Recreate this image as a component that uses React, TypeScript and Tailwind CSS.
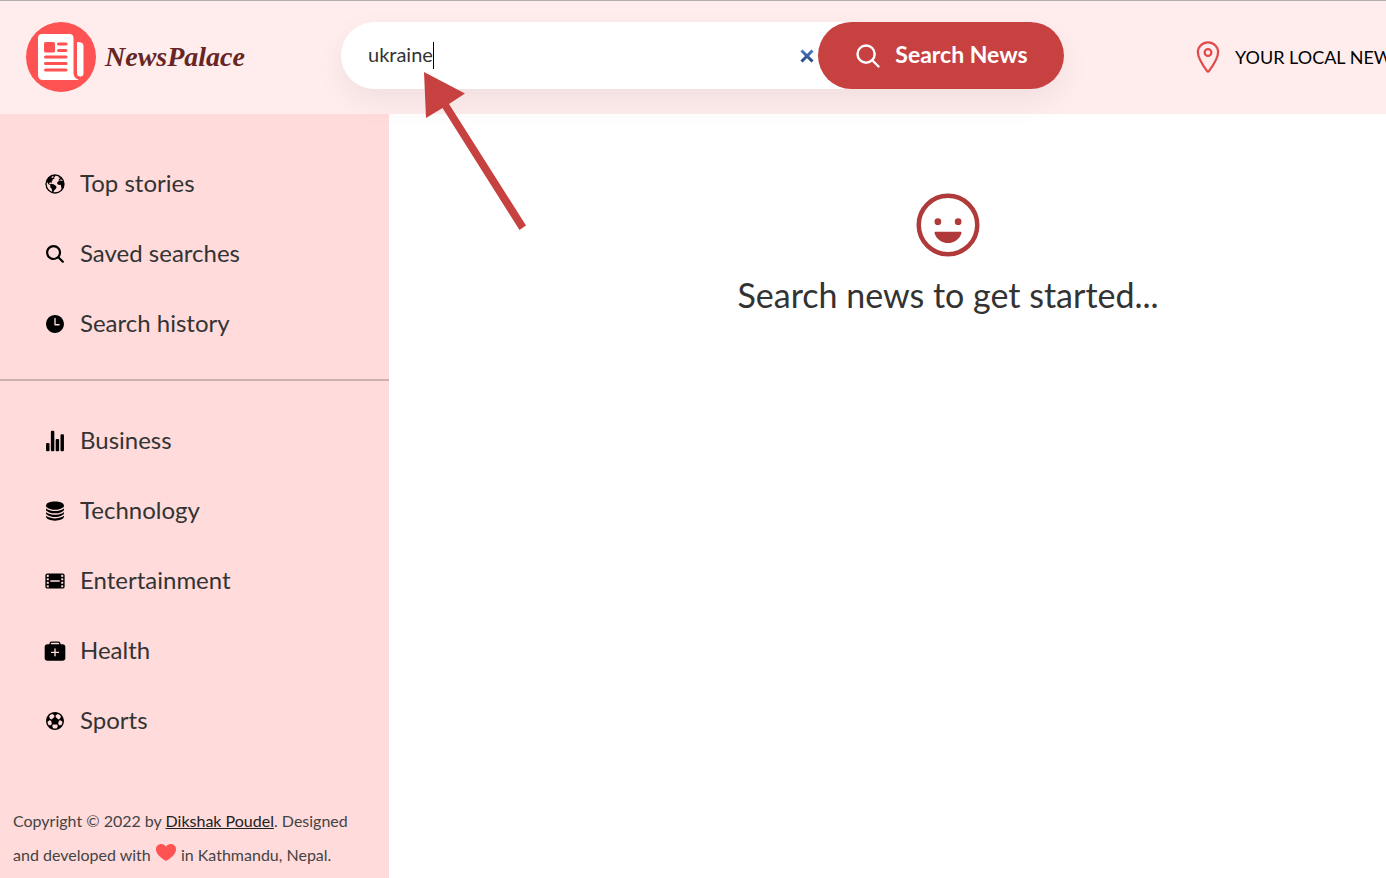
import { useState } from "react";
import type { ReactNode } from "react";
import type { IconType } from "react-icons";
import {
  IoEarth,
  IoFilm,
  IoFootball,
  IoHappyOutline,
  IoLocationOutline,
  IoMedkit,
  IoSearch,
  IoSearchOutline,
  IoServer,
  IoStatsChart,
  IoTime,
} from "react-icons/io5";

type NavItem = { label: string; icon: IconType };

const primary: NavItem[] = [
  { label: "Top stories", icon: IoEarth },
  { label: "Saved searches", icon: IoSearch },
  { label: "Search history", icon: IoTime },
];

const categories: NavItem[] = [
  { label: "Business", icon: IoStatsChart },
  { label: "Technology", icon: IoServer },
  { label: "Entertainment", icon: IoFilm },
  { label: "Health", icon: IoMedkit },
  { label: "Sports", icon: IoFootball },
];

function NavList({ items }: { items: NavItem[] }): ReactNode {
  return (
    <ul className="flex flex-col gap-[30px] pl-11">
      {items.map(({ label, icon: Icon }) => (
        <li key={label}>
          <a href="#" className="flex h-10 items-center gap-[14px] text-[24px] text-[#333]">
            <Icon className="size-[22px] text-black" aria-hidden="true" />
            <span className="pb-[3px]">{label}</span>
          </a>
        </li>
      ))}
    </ul>
  );
}

function Logo() {
  return (
    <a href="#" className="flex shrink-0 items-center gap-[9px]">
      <svg viewBox="0 0 70 70" className="size-[70px]" aria-hidden="true">
        <circle cx="35" cy="35" r="35" fill="#ff5252" />
        <path
          d="M16 12H43.500Q47.500 12 47.500 16V51Q47.500 56 53 58H17Q12 58 12 53V16Q12 12 16 12Z"
          fill="#fff"
        />
        <path d="M51 20H53Q57.500 20.500 57.500 24V51Q57.500 54.500 54.300 54.500Q51 54.500 51 51Z" fill="#fff" />
        <rect x="18" y="20" width="11" height="10.500" rx="1.500" fill="#ff5252" />
        <path
          d="M32.500 22H40M32.500 28.500H40M19.500 35H40M19.500 41.500H40M19.500 48H40"
          stroke="#ff5252"
          strokeWidth="3"
          strokeLinecap="round"
        />
      </svg>
      <span className="font-['Liberation_Serif',serif] text-[28px] leading-8 font-bold text-[#672626] italic">
        NewsPalace
      </span>
    </a>
  );
}

function SearchBar() {
  const [query, setQuery] = useState("ukraine");
  return (
    <form
      onSubmit={(e) => e.preventDefault()}
      className="flex h-[67px] w-[723px] shrink-0 rounded-full bg-white shadow-[0_12px_32px_rgba(0,0,0,0.06)]"
    >
      <div className="flex flex-1 items-center pr-1 pl-[27px]">
        <input
          type="text"
          aria-label="Search query"
          value={query}
          onChange={(e) => setQuery(e.target.value)}
          className="[field-sizing:content] bg-transparent pb-1 text-[20px] text-[#333] outline-none"
        />
        <span className="h-[27px] w-px bg-black" />
        <button
          type="button"
          aria-label="Clear"
          onClick={() => setQuery("")}
          className="ml-auto"
        >
          <svg viewBox="0 0 14 14" className="size-[14px]" aria-hidden="true">
            <defs>
              <linearGradient id="clear" x1="0" y1="0" x2="0" y2="14" gradientUnits="userSpaceOnUse">
                <stop offset="0" stopColor="#4a80cc" />
                <stop offset="1" stopColor="#24407c" />
              </linearGradient>
            </defs>
            <path d="M1.500 1.500L12.500 12.500M12.500 1.500L1.500 12.500" stroke="url(#clear)" strokeWidth="3" />
          </svg>
        </button>
      </div>
      <button
        type="submit"
        className="flex w-[246px] items-center justify-center gap-[13px] rounded-full bg-[#c74141] text-[23px] font-bold text-white"
      >
        <IoSearchOutline className="size-7 [&_path]:stroke-[44px]" aria-hidden="true" />
        <span className="pb-[3px]">Search News</span>
      </button>
    </form>
  );
}

function Heart() {
  return (
    <svg viewBox="0 0 20 17" className="mx-px inline h-[17px] w-5 align-baseline" role="img" aria-label="love">
      <path
        d="M10 17C6 14.500 0 10.500 0 5.200C0 2.200 2.300 0 5.200 0C7.300 0 9 1 10 2.800C11 1 12.700 0 14.800 0C17.700 0 20 2.200 20 5.200C20 10.500 14 14.500 10 17Z"
        fill="#ff5252"
      />
    </svg>
  );
}

function Arrow() {
  return (
    <svg
      viewBox="0 0 102 158"
      className="pointer-events-none absolute top-[72px] left-[424px] z-20 h-[158px] w-[102px]"
      aria-hidden="true"
    >
      <path d="M0 0L41 21.500L25 32L102 153.500L95.500 158L18.500 36L2 46Z" fill="#c74141" />
    </svg>
  );
}

export default function App() {
  return (
    <div className="relative min-h-screen overflow-hidden bg-white font-[Lato,sans-serif]">
      <div className="flex min-h-screen min-w-[1507px] flex-col">
        <header className="relative z-10 flex items-start border-t border-[#b3adae] bg-[#ffeded] pt-[21px] pb-[22px] pl-[26px]">
          <div className="w-[315px]">
            <Logo />
          </div>
          <SearchBar />
          <a
            href="#"
            className="ml-[126px] flex h-[70px] items-center gap-[9px] text-[18px] whitespace-nowrap text-black"
          >
            <IoLocationOutline className="size-9 text-[#e04c4c]" aria-hidden="true" />
            YOUR LOCAL NEWS
          </a>
        </header>
        <div className="flex flex-1">
          <aside className="flex w-[389px] shrink-0 flex-col justify-between bg-[#ffdbdb] pt-[50px] pb-[6px]">
            <nav>
              <NavList items={primary} />
              <hr className="mt-[35px] mb-10 border-t-2 border-[#ccafaf]" />
              <NavList items={categories} />
            </nav>
            <footer className="pr-8 pl-[13px] text-[16px] leading-[34px] text-[#444]">
              Copyright © 2022 by{" "}
              <a href="#" className="text-[#222] underline">
                Dikshak Poudel
              </a>
              . Designed
              <br />
              and developed with <Heart /> in Kathmandu, Nepal.
            </footer>
          </aside>
          <main className="flex flex-1 flex-col items-center gap-[10px] pt-[75px]">
            <IoHappyOutline className="size-[72px] text-[#b03a3a]" aria-hidden="true" />
            <h1 className="text-[34px] leading-12 text-[#333]">Search news to get started...</h1>
          </main>
        </div>
      </div>
      <Arrow />
    </div>
  );
}
